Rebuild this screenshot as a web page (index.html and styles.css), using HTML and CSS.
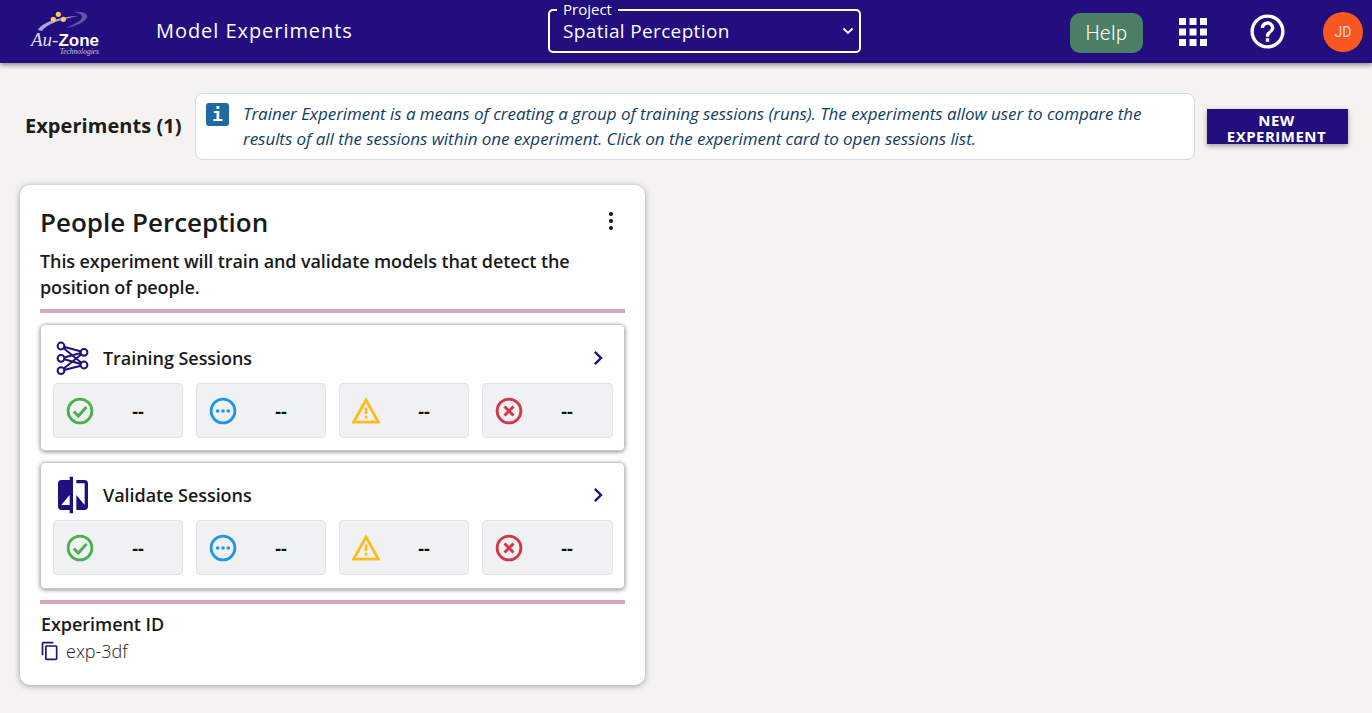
FILE: index.html
```html
<!DOCTYPE html>
<html lang="en">
<head>
<meta charset="utf-8">
<title>Model Experiments</title>
<link rel="stylesheet" href="styles.css">
</head>
<body>
<svg class="defs" width="0" height="0" aria-hidden="true">
  <defs>
    <symbol id="i-ok" viewBox="0 0 28 28"><circle cx="14" cy="14" r="11.900" fill="none" stroke="#4caf50" stroke-width="2.800"/><path d="M7.800 14.500l4.500 4.500L20.500 10" fill="none" stroke="#4caf50" stroke-width="3"/></symbol>
    <symbol id="i-run" viewBox="0 0 28 28"><circle cx="14" cy="14" r="11.900" fill="none" stroke="#2196e8" stroke-width="2.800"/><circle cx="8.700" cy="14" r="1.800" fill="#2196e8"/><circle cx="14" cy="14" r="1.800" fill="#2196e8"/><circle cx="19.300" cy="14" r="1.800" fill="#2196e8"/></symbol>
    <symbol id="i-warn" viewBox="0 0 28 28"><path d="M14 3L26.500 25.200H1.500z" fill="none" stroke="#fbbc1c" stroke-width="2.800"/><path d="M12.700 10.500h2.600v6.500h-2.600zM12.700 18.800h2.600v2.700h-2.600z" fill="#fbbc1c"/></symbol>
    <symbol id="i-err" viewBox="0 0 28 28"><circle cx="14" cy="14" r="11.900" fill="none" stroke="#d6364b" stroke-width="2.800"/><path d="M9.500 9.500l9 9M18.500 9.500l-9 9" fill="none" stroke="#d6364b" stroke-width="3"/></symbol>
    <symbol id="i-next" viewBox="0 0 24 24"><path d="M10 6L8.590 7.410 13.170 12l-4.580 4.590L10 18l6-6z" fill="#220e7e"/></symbol>
  </defs>
</svg>

<header class="topbar">
  <div class="logo">
    <svg class="logo-mark" viewBox="0 0 72 23" aria-hidden="true">
      <path d="M10 22C14 14 32 9 50 8 34 11 18 16 14 23z" fill="#a9a6d6"/>
      <path d="M46 4C56 3 62 7 58 11 54 16 44 19 38 20 46 16 54 13 54 9 54 6 50 5 46 4z" fill="#5f55ac"/>
      <circle cx="30.300" cy="6.300" r="2.600" fill="#f6c95e"/>
      <circle cx="25.300" cy="11.300" r="2.600" fill="#f6c95e"/>
      <circle cx="35.300" cy="11.300" r="2.600" fill="#f6c95e"/>
    </svg>
    <div class="logo-word"><span class="logo-au">Au-</span><span class="logo-zone">Zone</span></div>
    <div class="logo-sub">Technologies</div>
  </div>
  <div class="page-title">Model Experiments</div>
  <div class="project">
    <span class="project-label">Project</span>
    <span class="project-value">Spatial Perception</span>
    <svg class="project-caret" viewBox="0 0 12 8" aria-hidden="true"><path d="M1.500 1.500L6 6l4.500-4.500" fill="none" stroke="#fff" stroke-width="1.800"/></svg>
  </div>
  <div class="top-actions">
    <button class="help" type="button">Help</button>
    <svg class="apps" viewBox="0 0 24 24" aria-hidden="true">
      <path d="M4 8h4V4H4v4zm6 12h4v-4h-4v4zm-6 0h4v-4H4v4zm0-6h4v-4H4v4zm6 0h4v-4h-4v4zm6-10v4h4V4h-4zm-6 4h4V4h-4v4zm6 6h4v-4h-4v4zm0 6h4v-4h-4v4z" fill="#fff"/>
    </svg>
    <svg class="question" viewBox="0 0 24 24" aria-hidden="true">
      <path d="M11 18h2v-2h-2v2zm1-16C6.480 2 2 6.480 2 12s4.480 10 10 10 10-4.480 10-10S17.520 2 12 2zm0 18c-4.410 0-8-3.590-8-8s3.590-8 8-8 8 3.590 8 8-3.590 8-8 8zm0-14c-2.210 0-4 1.790-4 4h2c0-1.100.9-2 2-2s2 .9 2 2c0 2-3 1.750-3 5h2c0-2.250 3-2.500 3-5 0-2.210-1.790-4-4-4z" fill="#fff"/>
    </svg>
    <div class="avatar">JD</div>
  </div>
</header>

<main class="content">
  <section class="intro">
    <h1 class="count">Experiments (1)</h1>
    <div class="info">
      <span class="info-icon">i</span>
      <p class="info-text">Trainer Experiment is a means of creating a group of training sessions (runs). The experiments allow user to compare the results of all the sessions within one experiment. Click on the experiment card to open sessions list.</p>
    </div>
    <button class="new-exp" type="button">NEW EXPERIMENT</button>
  </section>

  <article class="card">
    <div class="card-head">
      <h2 class="card-title">People Perception</h2>
      <svg class="kebab" viewBox="0 0 6 20" aria-hidden="true"><circle cx="3" cy="3" r="2" fill="#111"/><circle cx="3" cy="10" r="2" fill="#111"/><circle cx="3" cy="17" r="2" fill="#111"/></svg>
    </div>
    <p class="card-desc">This experiment will train and validate models that detect the position of people.</p>
    <hr class="rule rule-top">

    <section class="sessions">
      <div class="sessions-head">
        <svg class="s-icon" viewBox="0 0 36 36" aria-hidden="true">
          <g fill="none" stroke="#220e7e" stroke-width="2">
            <path d="M6 6L29 12.300M6 6L29 25M6 18.300L29 12.300M6 18.300L29 25M6 30.700L29 12.300M6 30.700L29 25"/>
            <g fill="#fff"><circle cx="6" cy="6" r="3.400"/><circle cx="6" cy="18.300" r="3.400"/><circle cx="6" cy="30.700" r="3.400"/><circle cx="29" cy="12.300" r="3.400"/><circle cx="29" cy="25" r="3.400"/></g>
          </g>
        </svg>
        <span class="s-title">Training Sessions</span>
        <svg class="next" aria-hidden="true"><use href="#i-next"/></svg>
      </div>
      <div class="stats">
        <div class="stat"><svg class="st-icon" aria-hidden="true"><use href="#i-ok"/></svg><span class="st-val">--</span></div>
        <div class="stat"><svg class="st-icon" aria-hidden="true"><use href="#i-run"/></svg><span class="st-val">--</span></div>
        <div class="stat"><svg class="st-icon" aria-hidden="true"><use href="#i-warn"/></svg><span class="st-val">--</span></div>
        <div class="stat"><svg class="st-icon" aria-hidden="true"><use href="#i-err"/></svg><span class="st-val">--</span></div>
      </div>
    </section>

    <section class="sessions">
      <div class="sessions-head sessions-head-short">
        <svg class="s-icon-compare" viewBox="0 0 24 24" aria-hidden="true">
          <path d="M10 3H5c-1.100 0-2 .9-2 2v14c0 1.100.9 2 2 2h5v2h2V1h-2v2zm0 15H5l5-6v6zm9-15h-5v2h5v13l-5-6v9h5c1.100 0 2-.9 2-2V5c0-1.100-.9-2-2-2z" fill="#220e7e"/>
        </svg>
        <span class="s-title s-title-compare">Validate Sessions</span>
        <svg class="next" aria-hidden="true"><use href="#i-next"/></svg>
      </div>
      <div class="stats">
        <div class="stat"><svg class="st-icon" aria-hidden="true"><use href="#i-ok"/></svg><span class="st-val">--</span></div>
        <div class="stat"><svg class="st-icon" aria-hidden="true"><use href="#i-run"/></svg><span class="st-val">--</span></div>
        <div class="stat"><svg class="st-icon" aria-hidden="true"><use href="#i-warn"/></svg><span class="st-val">--</span></div>
        <div class="stat"><svg class="st-icon" aria-hidden="true"><use href="#i-err"/></svg><span class="st-val">--</span></div>
      </div>
    </section>

    <hr class="rule rule-bottom">
    <div class="id-label">Experiment ID</div>
    <div class="id-row">
      <svg class="copy" viewBox="0 0 24 24" aria-hidden="true">
        <path d="M16 1H4c-1.100 0-2 .9-2 2v14h2V3h12V1zm3 4H8c-1.100 0-2 .9-2 2v14c0 1.100.9 2 2 2h11c1.100 0 2-.9 2-2V7c0-1.100-.9-2-2-2zm0 16H8V7h11v14z" fill="#220e7e"/>
      </svg>
      <span class="id-value">exp-3df</span>
    </div>
  </article>
</main>
</body>
</html>
```
FILE: styles.css
```css
* { box-sizing: border-box; }
html, body { margin: 0; padding: 0; }
body {
  min-height: 713px;
  background: #f4f3f2;
  font-family: "Open Sans", "Liberation Sans", sans-serif;
  color: #111;
  overflow: hidden;
}
.defs { display: block; height: 0; }

/* Top bar */
.topbar {
  display: flex;
  align-items: center;
  height: 63px;
  padding-left: 28px;
  padding-right: 9px;
  background: #220e7e;
  box-shadow: 0 2px 5px rgba(0, 0, 0, .45);
  color: #fff;
}
.logo {
  display: flex;
  flex-direction: column;
  align-self: flex-start;
  width: 72px;
  margin-top: 8px;
  flex: none;
}
.logo-mark { display: block; width: 72px; height: 23px; flex: none; }
.logo-word { display: flex; align-items: baseline; height: 16px; line-height: 16px; margin-top: 1px; padding-left: 3px; }
.logo-au { font-family: "Liberation Serif", serif; font-style: italic; font-size: 19px; color: #dedcf0; }
.logo-zone { font-family: "Liberation Sans", sans-serif; font-weight: 700; font-size: 17px; color: #fff; }
.logo-sub {
  font-family: "Liberation Serif", serif;
  font-style: italic;
  font-size: 7.500px;
  line-height: 8px;
  text-align: right;
  margin-top: 0;
  padding-right: 1px;
  color: #c9c6e2;
}
.page-title {
  width: 392px;
  margin-left: 56px;
  margin-top: -2px;
  font-size: 20px;
  letter-spacing: .95px;
  flex: none;
}
.project {
  position: relative;
  display: flex;
  align-items: center;
  width: 313px;
  height: 44px;
  margin-top: -1px;
  padding: 0 3px 0 13px;
  border: 2px solid #fff;
  border-radius: 5px;
  flex: none;
}
.project-label {
  position: absolute;
  top: -9px;
  left: 7px;
  padding: 0 6px;
  background: #220e7e;
  font-size: 15px;
  line-height: 15px;
}
.project-value { flex: 1; font-size: 19px; letter-spacing: .35px; line-height: 24px; }
.project-caret { width: 12px; height: 8px; margin-right: 2px; }
.top-actions {
  display: flex;
  align-items: center;
  margin-left: auto;
}
.help {
  width: 73px;
  height: 40px;
  margin-top: 2px;
  border: 0;
  border-radius: 10px;
  background: #4d7f66;
  color: #fff;
  font-family: Roboto, "Open Sans", sans-serif;
  font-size: 20px;
  font-weight: 300;
  letter-spacing: .5px;
}
.apps { width: 42px; height: 42px; margin-left: 29px; }
.question { width: 41px; height: 41px; margin-left: 33px; }
.avatar {
  display: flex;
  align-items: center;
  justify-content: center;
  width: 40px;
  height: 40px;
  margin-left: 35px;
  border-radius: 50%;
  background: #fb5722;
  box-shadow: 0 0 2px rgba(0, 0, 0, .3);
  color: #f5d8cc;
  font-family: Roboto, sans-serif;
  font-size: 14px;
}

/* Content */
.content { padding: 30px 24px 0 20px; }
.intro { display: flex; align-items: center; }
.count {
  width: 170px;
  margin: 0 0 2px 5px;
  font-size: 20px;
  font-weight: 700;
  letter-spacing: .05px;
  color: #1c1c1c;
  white-space: nowrap;
}
.info {
  display: flex;
  width: 1000px;
  height: 67px;
  padding: 9px 30px 0 10px;
  background: #fff;
  border: 1px solid #d3dbe3;
  border-radius: 8px;
  flex: none;
}
.info-icon {
  display: flex;
  align-items: center;
  justify-content: center;
  width: 23px;
  height: 23px;
  margin-right: 14px;
  border-radius: 3px;
  background: #1f6aa3;
  color: #fff;
  font-family: "DejaVu Sans Mono", monospace;
  font-size: 18px;
  font-weight: 700;
  flex: none;
}
.info-text {
  margin: -2px 0 0;
  font-size: 17px;
  line-height: 25px;
  font-style: italic;
  letter-spacing: -.045px;
  color: #0f3d63;
}
.new-exp {
  width: 141px;
  height: 35px;
  margin-left: 12px;
  padding: 4px 21px 0 19px;
  border: 0;
  background: #220e7e;
  box-shadow: 0 2px 5px rgba(0, 0, 0, .35);
  color: #fff;
  font-family: "Open Sans", sans-serif;
  font-size: 15px;
  font-weight: 700;
  line-height: 15.500px;
  letter-spacing: .5px;
  flex: none;
}

/* Experiment card */
.card {
  width: 625px;
  height: 500px;
  margin-top: 25px;
  padding: 20px;
  background: #fff;
  border-radius: 10px;
  box-shadow: 0 1px 6px rgba(0, 0, 0, .35);
}
.card-head {
  display: flex;
  justify-content: space-between;
  align-items: center;
  height: 36px;
}
.card-title { margin: -3px 0 0; font-size: 26px; font-weight: 650; letter-spacing: 0; color: #1a1a1a; }
.kebab { width: 6px; height: 20px; margin-right: 11px; margin-top: -4px; }
.card-desc {
  margin: 7px 0 0;
  font-size: 18px;
  font-weight: 600;
  line-height: 26px;
  color: #1a1a1a;
  letter-spacing: -.1px;
}
.rule { height: 4px; margin: 0; border: 0; background: #d8a5c0; }
.rule-top { margin-top: 9px; }
.rule-bottom { margin-top: 11px; }
.sessions {
  height: 127px;
  margin-top: 11px;
  padding: 0 12px;
  border: 1px solid #c8c8c8;
  border-radius: 5px;
  box-shadow: 0 1px 4px rgba(0, 0, 0, .45);
}
.sessions-head {
  display: flex;
  align-items: center;
  height: 58px;
  padding-top: 8px;
}
.sessions-head-short { height: 57px; padding-top: 7px; }
.s-icon { width: 36px; height: 36px; margin-left: 2px; flex: none; }
.s-icon-compare { width: 40px; height: 40px; flex: none; }
.s-title { flex: 1; margin-left: 12px; font-size: 18px; font-weight: 600; letter-spacing: -.05px; color: #1a1a1a; }
.s-title-compare { margin-left: 10px; }
.next { width: 28px; height: 28px; margin-right: 0; }
.stats {
  display: grid;
  grid-template-columns: 130px 130px 130px 131px;
  gap: 13px;
}
.stat {
  display: flex;
  align-items: center;
  height: 55px;
  background: #f0f1f3;
  border: 1px solid #e2e3e5;
  border-radius: 4px;
}
.st-icon { width: 28px; height: 28px; margin-left: 12px; }
.st-val { width: 60px; margin-left: 14px; text-align: center; font-size: 18px; font-weight: 700; color: #111; }
.id-label { margin-top: 10px; margin-left: 1px; font-size: 18px; font-weight: 600; letter-spacing: -.05px; line-height: 20px; color: #1a1a1a; }
.id-row { display: flex; align-items: center; margin-top: 7px; }
.copy { width: 20px; height: 20px; }
.id-value { margin-left: 6px; font-size: 18px; font-weight: 300; line-height: 20px; color: #222; }
```
